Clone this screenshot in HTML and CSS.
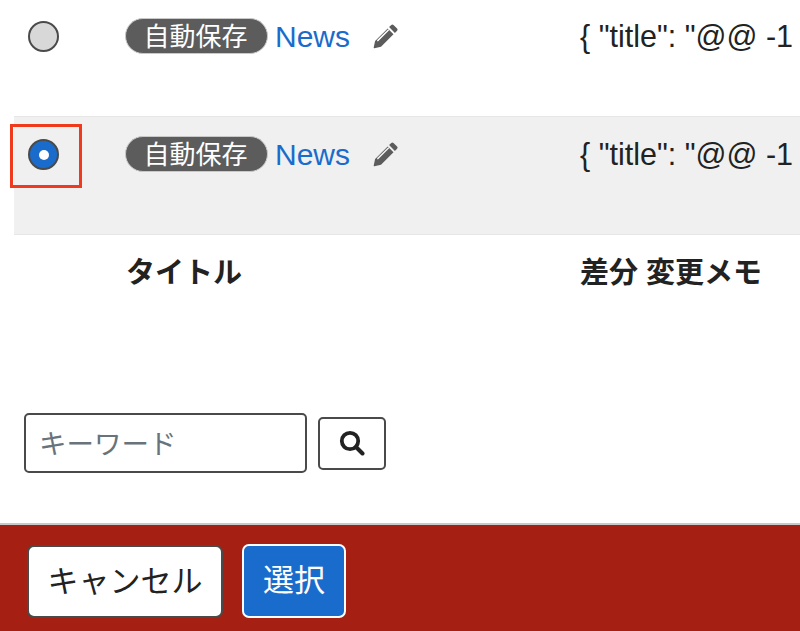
FILE: index.html
```html
<!DOCTYPE html>
<html lang="ja">
<head>
<meta charset="utf-8">
<title>リビジョン</title>
<link rel="stylesheet" href="styles.css">
</head>
<body>
<main class="content">
  <div class="row">
    <div class="cell-radio"><span class="radio"></span></div>
    <div class="cell-title">
      <span class="badge">自動保存</span>
      <a class="link" href="#">News</a>
      <svg class="pencil" viewBox="0 0 26 26"><path d="M18.3 1.9a1.6 1.6 0 0 1 2.2 0l3.6 3.6a1.6 1.6 0 0 1 0 2.2l-2.2 2.2-5.8-5.8zM14.7 5.500l5.800 5.800L8 23.800l-6.600 1.400a.6.6 0 0 1-.7-.7L2.100 18z M4 18.300l1.200-.1 11-11-1-1L4.200 17z" fill-rule="evenodd"/></svg>
    </div>
    <div class="cell-diff">{ "title": "@@ -1</div>
  </div>
  <div class="row row-active">
    <div class="cell-radio">
      <span class="highlight"><span class="radio radio-on"></span></span>
    </div>
    <div class="cell-title">
      <span class="badge">自動保存</span>
      <a class="link" href="#">News</a>
      <svg class="pencil" viewBox="0 0 26 26"><path d="M18.3 1.9a1.6 1.6 0 0 1 2.2 0l3.6 3.6a1.6 1.6 0 0 1 0 2.2l-2.2 2.2-5.8-5.8zM14.7 5.500l5.800 5.800L8 23.800l-6.600 1.400a.6.6 0 0 1-.7-.7L2.100 18z M4 18.300l1.200-.1 11-11-1-1L4.200 17z" fill-rule="evenodd"/></svg>
    </div>
    <div class="cell-diff">{ "title": "@@ -1</div>
  </div>
  <div class="row-head">
    <div class="cell-radio"></div>
    <div class="cell-title">タイトル</div>
    <div class="cell-diff">差分 変更メモ</div>
  </div>
  <form class="search">
    <input class="search-input" type="text" placeholder="キーワード">
    <button class="search-button" type="button" aria-label="検索">
      <svg class="search-icon" viewBox="0 0 26 26"><circle cx="11" cy="11" r="8.200" fill="none" stroke="currentColor" stroke-width="3.800"/><path d="M17 17l6.500 6.500" fill="none" stroke="currentColor" stroke-width="4" stroke-linecap="round"/></svg>
    </button>
  </form>
</main>
<footer class="footer">
  <button class="btn btn-cancel" type="button">キャンセル</button>
  <button class="btn btn-select" type="button">選択</button>
</footer>
</body>
</html>
```
FILE: styles.css
```css
*, *::before, *::after { box-sizing: border-box; }
html, body { margin: 0; height: 631px; overflow: hidden; }
body {
  display: flex;
  flex-direction: column;
  background: #fff;
  color: #222;
  font-family: "Liberation Sans", "Noto Sans CJK JP", sans-serif;
  font-size: 30px;
  line-height: 38px;
}
.content { flex: 1; margin-top: -1px; padding-left: 14px; min-height: 0; }
.row {
  display: grid;
  grid-template-columns: 112px 454px 1fr;
  height: 118px;
  border-bottom: 1px solid #e6e6e6;
}
.row-active { background: #f0f0f0; }
.row-head {
  display: grid;
  grid-template-columns: 112px 454px 1fr;
  height: 72px;
  padding-top: 19px;
  font-size: 29px;
  font-weight: 700;
}
.cell-radio { padding: 22px 0 0 14px; }
.cell-title {
  display: flex;
  align-items: flex-start;
}
.row .cell-title { padding-top: 19px; }
.row .cell-diff { padding-top: 18px; font-size: 30.500px; }
.radio {
  display: block;
  width: 31px;
  height: 31px;
  border: 2px solid #4a4a4a;
  border-radius: 50%;
  background: #d8d8d8;
}
.radio-on {
  background: #1a6ccc;
  position: relative;
}
.radio-on::after {
  content: "";
  position: absolute;
  left: 8.500px;
  top: 8.500px;
  width: 10px;
  height: 10px;
  border-radius: 50%;
  background: #fff;
}
.highlight {
  display: block;
  position: relative;
  width: 31px;
  height: 31px;
}
.highlight::before {
  content: "";
  position: absolute;
  left: -18px;
  top: -15px;
  width: 72px;
  height: 64px;
  border: 3px solid #f03a1e;
}
.badge {
  display: block;
  height: 36px;
  width: 143px;
  margin-left: -1px;
  border-radius: 18px;
  background: #5c5c5c;
  border: 1px solid #c9c9c9;
  color: #fff;
  font-size: 26px;
  line-height: 36px;
  text-align: center;
  padding-right: 2px;
}
.link {
  color: #1a6ccc;
  text-decoration: none;
  margin-left: 7px;
}
.pencil {
  width: 26px;
  height: 26px;
  margin: 5px 0 0 23px;
  fill: #5c5c5c;
}
.search {
  display: flex;
  align-items: center;
  gap: 11px;
  margin: 106px 0 0 10px;
}
.search-input {
  width: 283px;
  height: 60px;
  border: 2px solid #4a4a4a;
  border-radius: 5px;
  padding: 4px 13px 0;
  font: inherit;
  font-size: 27.500px;
  background: #fff;
  color: #222;
}
.search-input::placeholder { color: #68737c; opacity: 1; }
.search-button {
  width: 68px;
  height: 53px;
  padding: 0;
  border: 2px solid #4a4a4a;
  border-radius: 5px;
  background: #fff;
  color: #222;
  display: flex;
  align-items: center;
  justify-content: center;
}
.search-icon { width: 26px; height: 26px; }
.footer {
  display: flex;
  align-items: flex-start;
  gap: 19px;
  flex: 0 0 108px;
  padding: 19px 0 0 27px;
  background: #a61f13;
  border-top: 2px solid #c8c8c8;
}
.btn {
  border-radius: 7px;
  font: inherit;
  font-size: 31px;
  padding: 0;
}
.btn-cancel {
  width: 196px;
  height: 73px;
  margin-top: 1px;
  background: #fff;
  border: 2px solid #4a4a4a;
  color: #222;
}
.btn-select {
  width: 104px;
  height: 74px;
  background: #1a6ccc;
  border: 2px solid #fff;
  color: #fff;
}
```
